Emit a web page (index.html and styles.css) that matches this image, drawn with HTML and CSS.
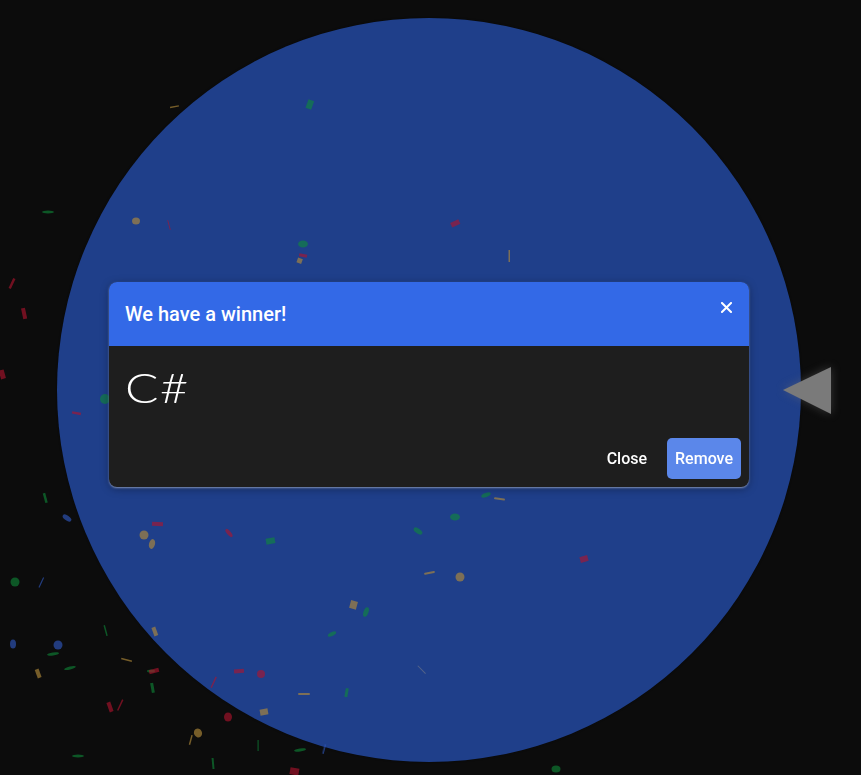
FILE: index.html
```html
<!DOCTYPE html>
<html lang="en">
<head>
<meta charset="utf-8">
<title>Wheel winner</title>
<link rel="stylesheet" href="styles.css">
</head>
<body>
<div class="stage">
  <div class="wheel"></div>
  <svg class="pointer" width="861" height="775" viewBox="0 0 861 775" aria-hidden="true">
    <polygon points="783,390 831,367 831,414" fill="#7a7a7a"/>
  </svg>
  <svg class="confetti" width="861" height="775" viewBox="0 0 861 775" aria-hidden="true">
    <g class="c-gold">
      <rect x="170" y="106" width="9" height="1.5" transform="rotate(-10 174 107)"/>
      <ellipse cx="136" cy="221" rx="4" ry="3.5"/>
      <rect x="297" y="258" width="5" height="5" transform="rotate(20 299 261)"/>
      <rect x="508.5" y="250" width="1.5" height="12"/>
      <ellipse cx="144" cy="535" rx="4.5" ry="4.5"/>
      <ellipse cx="152" cy="544" rx="3" ry="5" transform="rotate(15 152 544)"/>
      <rect x="153" y="627" width="4" height="9" transform="rotate(-20 155 632)"/>
      <rect x="36" y="669" width="4" height="9" transform="rotate(-20 38 673)"/>
      <rect x="121" y="659" width="11" height="1.5" transform="rotate(15 126 660)"/>
      <rect x="298" y="693" width="12" height="2" rx="1"/>
      <rect x="260" y="709" width="8" height="6" transform="rotate(-10 264 712)"/>
      <ellipse cx="198" cy="733" rx="4" ry="4.5" transform="rotate(-30 198 733)"/>
      <rect x="190" y="735" width="1.5" height="10" transform="rotate(15 191 740)"/>
      <rect x="494" y="498" width="11" height="2" rx="1" transform="rotate(8 500 499)"/>
      <rect x="424" y="572" width="11" height="2" rx="1" transform="rotate(-12 429 573)"/>
      <ellipse cx="460" cy="577" rx="4.5" ry="4.5"/>
      <rect x="350" y="601" width="7" height="8" transform="rotate(15 354 605)"/>
    </g>
    <g class="c-green">
      <rect x="307" y="100" width="6" height="9" transform="rotate(20 310 104)"/>
      <ellipse cx="48" cy="212" rx="6" ry="1.5"/>
      <ellipse cx="303" cy="244" rx="5" ry="3.5"/>
      <ellipse cx="105" cy="399" rx="5" ry="5"/>
      <rect x="44" y="493" width="2.5" height="10" transform="rotate(-15 45 498)"/>
      <rect x="266" y="538" width="9" height="6" transform="rotate(-10 270 541)"/>
      <ellipse cx="15" cy="582" rx="4.5" ry="4.5"/>
      <rect x="105" y="625" width="1.5" height="11" transform="rotate(-15 106 631)"/>
      <ellipse cx="53" cy="654" rx="6" ry="1.5" transform="rotate(-8 53 654)"/>
      <ellipse cx="70" cy="668" rx="6" ry="1.5" transform="rotate(-15 70 668)"/>
      <rect x="151" y="683" width="3" height="10" transform="rotate(-10 152 688)"/>
      <ellipse cx="78" cy="756" rx="6" ry="1.5"/>
      <rect x="257.5" y="740" width="1.2" height="11"/>
      <ellipse cx="300" cy="750" rx="6" ry="1.5" transform="rotate(-8 300 750)"/>
      <rect x="212" y="758" width="2" height="11" transform="rotate(-5 213 763)"/>
      <ellipse cx="486" cy="495" rx="5" ry="2" transform="rotate(-20 486 495)"/>
      <ellipse cx="455" cy="517" rx="5" ry="3.5"/>
      <ellipse cx="418" cy="531" rx="5" ry="2.5" transform="rotate(35 418 531)"/>
      <ellipse cx="366" cy="612" rx="2.5" ry="5" transform="rotate(20 366 612)"/>
      <ellipse cx="332" cy="634" rx="4.5" ry="2" transform="rotate(-25 332 634)"/>
      <rect x="345" y="688" width="3" height="9" transform="rotate(10 346 693)"/>
      <ellipse cx="556" cy="769" rx="4.5" ry="3.5"/>
      <ellipse cx="151" cy="671" rx="4" ry="1.5"/>
    </g>
    <g class="c-red">
      <rect x="168.5" y="220" width="1" height="10" transform="rotate(-15 169 225)"/>
      <rect x="451" y="221" width="9" height="5" transform="rotate(-25 455 224)"/>
      <rect x="299" y="254" width="8" height="3" transform="rotate(10 303 256)"/>
      <rect x="11" y="278" width="2.5" height="11" transform="rotate(25 12 283)"/>
      <rect x="22" y="308" width="4" height="11" transform="rotate(-12 24 313)"/>
      <rect x="0" y="370" width="5" height="9" transform="rotate(-15 2 375)"/>
      <rect x="72" y="412" width="9" height="2.5" transform="rotate(10 77 413)"/>
      <rect x="152" y="522" width="11" height="4" transform="rotate(3 157 524)"/>
      <ellipse cx="229" cy="533" rx="2" ry="5" transform="rotate(-40 229 533)"/>
      <rect x="580" y="556" width="8" height="6" transform="rotate(-15 584 559)"/>
      <rect x="234" y="669" width="10" height="4" transform="rotate(-5 240 671)"/>
      <ellipse cx="261" cy="674" rx="4" ry="4"/>
      <rect x="149" y="669" width="10" height="4" transform="rotate(-15 154 671)"/>
      <rect x="213" y="676" width="1.5" height="12" transform="rotate(25 213 682)"/>
      <rect x="108" y="702" width="4" height="10" transform="rotate(-20 110 707)"/>
      <rect x="119.5" y="699" width="1.5" height="12" transform="rotate(25 120 705)"/>
      <ellipse cx="228" cy="717" rx="4" ry="4.5"/>
      <rect x="290" y="768" width="9" height="7" transform="rotate(10 295 771)"/>
    </g>
    <g class="c-blue">
      <ellipse cx="67" cy="518" rx="5" ry="2.5" transform="rotate(35 67 518)"/>
      <rect x="40.5" y="577" width="1.2" height="11" transform="rotate(25 41 583)"/>
      <ellipse cx="13" cy="644" rx="3" ry="4.5"/>
      <ellipse cx="58" cy="645" rx="4.5" ry="4.5"/>
      <rect x="323.5" y="744" width="1.5" height="10" transform="rotate(15 324 749)"/>
    </g>
    <g class="c-gray">
      <rect x="421.5" y="664" width="1" height="11" transform="rotate(-45 422 670)"/>
    </g>
  </svg>
  <div class="modal" role="dialog" aria-labelledby="modal-title">
    <div class="modal-header">
      <h2 class="modal-title" id="modal-title">We have a winner!</h2>
      <button class="modal-x" type="button" aria-label="Close">
        <svg width="11" height="11" viewBox="0 0 11 11"><path d="M1 1L10 10M10 1L1 10" stroke="#fff" stroke-width="2" stroke-linecap="square"/></svg>
      </button>
    </div>
    <div class="modal-body">
      <div class="winner">C#</div>
    </div>
    <div class="modal-footer">
      <button class="btn btn-text" type="button">Close</button>
      <button class="btn btn-primary" type="button">Remove</button>
    </div>
  </div>
</div>
</body>
</html>
```

FILE: styles.css
```css
html, body {
  margin: 0;
  padding: 0;
  background: #0c0c0c;
}

.stage {
  position: relative;
  width: 861px;
  height: 775px;
  overflow: hidden;
  font-family: Roboto, "Liberation Sans", sans-serif;
}

.wheel {
  position: absolute;
  left: 57px;
  top: 18px;
  width: 744px;
  height: 744px;
  border-radius: 50%;
  background: #1f3f8a;
  box-shadow: 0 0 2px 0 rgba(0, 0, 0, 0.5);
}

.pointer {
  position: absolute;
  left: 0;
  top: 0;
  filter: drop-shadow(0 0 5px rgba(110, 110, 110, 0.45));
}

.confetti {
  position: absolute;
  left: 0;
  top: 0;
}

.c-gold { fill: #b08a3a; opacity: 0.65; }
.c-green { fill: #0f8a3a; opacity: 0.6; }
.c-red { fill: #b0142e; opacity: 0.62; }
.c-blue { fill: #2d52b0; opacity: 0.7; }
.c-gray { fill: #888; opacity: 0.5; }

.modal {
  position: absolute;
  left: 109px;
  top: 282px;
  width: 640px;
  border-radius: 8px;
  overflow: hidden;
  background: #1e1e1e;
  box-shadow: 0 1px 2px rgba(160, 175, 210, 0.75), 0 2px 8px rgba(0, 0, 0, 0.35);
}

.modal-header {
  position: relative;
  height: 64px;
  padding: 0 16px;
  display: flex;
  align-items: center;
  background: #3369e7;
}

.modal-title {
  margin: 0;
  font-size: 20px;
  font-weight: 500;
  color: #fff;
}

.modal-x {
  position: absolute;
  right: 17px;
  top: 20px;
  width: 11px;
  height: 11px;
  padding: 0;
  border: 0;
  background: none;
  display: flex;
}

.modal-body {
  height: 84px;
  padding: 20px 16px 0;
  box-sizing: border-box;
}

.winner {
  display: inline-block;
  font-family: Lato, "Open Sans", sans-serif;
  font-weight: 300;
  font-size: 42px;
  line-height: 42px;
  color: #fff;
  letter-spacing: 1px;
  transform: scaleX(1.18);
  transform-origin: left center;
}

.modal-footer {
  display: flex;
  justify-content: flex-end;
  gap: 12px;
  padding: 8px;
}

.btn {
  height: 41px;
  padding: 0 8px;
  border: 0;
  border-radius: 5px;
  font-family: Roboto, "Liberation Sans", sans-serif;
  font-size: 16px;
  font-weight: 500;
  color: #fff;
  background: none;
}

.btn-primary {
  background: #5b87ea;
}
```
